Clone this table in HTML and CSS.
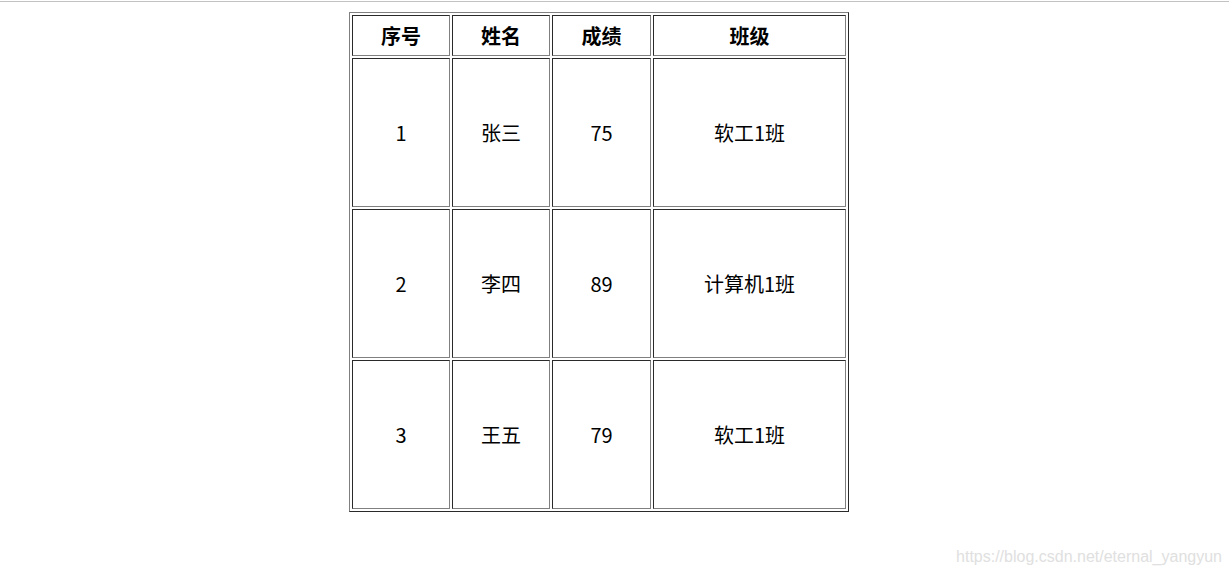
FILE: index.html
```html
<!DOCTYPE html>
<html lang="zh">
<head>
<meta charset="utf-8">
<title>成绩表</title>
<link rel="stylesheet" href="styles.css">
</head>
<body>
<div class="topline"></div>
<div class="wrap">
<table class="grades">
  <thead>
    <tr><th>序号</th><th>姓名</th><th>成绩</th><th>班级</th></tr>
  </thead>
  <tbody>
    <tr><td>1</td><td>张三</td><td>75</td><td>软工1班</td></tr>
    <tr><td>2</td><td>李四</td><td>89</td><td>计算机1班</td></tr>
    <tr><td>3</td><td>王五</td><td>79</td><td>软工1班</td></tr>
  </tbody>
</table>
</div>
<div class="watermark">https://blog.csdn.net/eternal_yangyun</div>
</body>
</html>
```
FILE: styles.css
```css
html, body {
  margin: 0;
  padding: 0;
  background: #fff;
}
body {
  font-family: "Microsoft YaHei", "Noto Sans CJK SC", "Noto Sans", sans-serif;
  color: #000;
  position: relative;
  height: 575px;
  overflow: hidden;
}
.topline {
  margin-top: 1px;
  height: 1px;
  background: #c2c2c2;
}
.wrap {
  padding: 10px 0 0 349px;
}
.grades {
  width: 500px;
  border-collapse: separate;
  border-spacing: 2px;
  border: 1px solid;
  border-color: #808080 #2a2a2a #2a2a2a #808080;
  font-size: 20px;
}
.grades th, .grades td {
  border: 1px solid;
  border-color: #2a2a2a #808080 #808080 #2a2a2a;
  padding: 1px;
  text-align: center;
  vertical-align: middle;
}
.grades th {
  height: 37px;
  font-weight: bold;
}
.grades td {
  height: 145px;
  font-weight: normal;
}
.grades th:nth-child(1), .grades td:nth-child(1) { width: 94px; }
.grades th:nth-child(2), .grades td:nth-child(2) { width: 94px; }
.grades th:nth-child(3), .grades td:nth-child(3) { width: 95px; }
.watermark {
  position: absolute;
  right: 7px;
  bottom: 9px;
  font-family: "Liberation Sans", Arial, sans-serif;
  font-size: 16px;
  color: #e0e0e0;
}
```
